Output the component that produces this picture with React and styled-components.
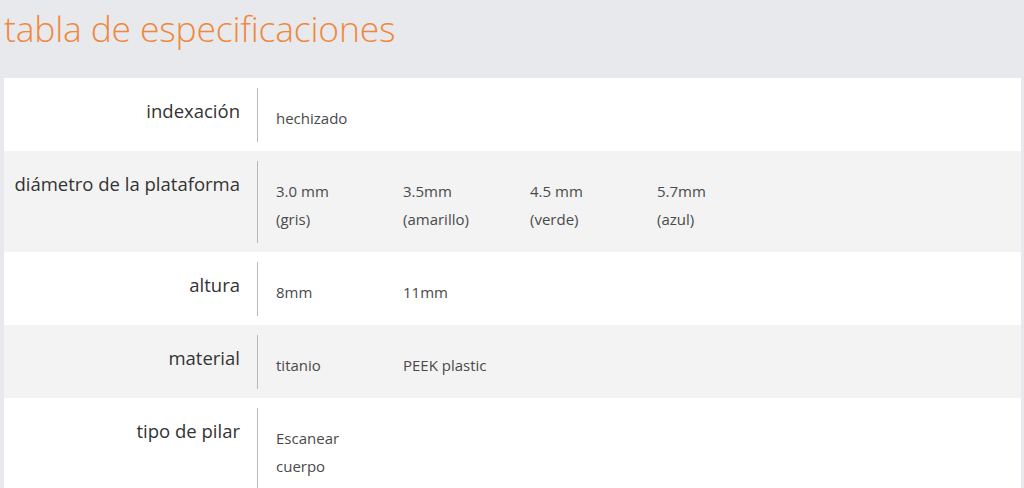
import React from 'react';
import styled, { createGlobalStyle } from 'styled-components';

const GlobalStyle = createGlobalStyle`
  html, body {
    margin: 0;
    padding: 0;
    background: #e8e9ed;
    font-family: "Open Sans", "Noto Sans", sans-serif;
  }
`;

const rows = [
  { label: 'indexación', values: [['hechizado']] },
  {
    label: 'diámetro de la plataforma',
    values: [
      ['3.0 mm', '(gris)'],
      ['3.5mm', '(amarillo)'],
      ['4.5 mm', '(verde)'],
      ['5.7mm', '(azul)'],
    ],
  },
  { label: 'altura', values: [['8mm'], ['11mm']] },
  { label: 'material', values: [['titanio'], ['PEEK plastic']] },
  { label: 'tipo de pilar', values: [['Escanear', 'cuerpo']] },
];

export default function App() {
  return (
    <Page>
      <GlobalStyle />
      <Title>tabla de especificaciones</Title>
      <Table>
        {rows.map((row, i) => (
          <Row key={row.label} $alt={i % 2 === 1}>
            <Label>{row.label}</Label>
            <Values>
              {row.values.map((lines, j) => (
                <Value key={j}>
                  {lines.map((l) => (
                    <div key={l}>{l}</div>
                  ))}
                </Value>
              ))}
            </Values>
          </Row>
        ))}
      </Table>
    </Page>
  );
}

const Page = styled.div`
  padding: 0 3px 0 4px;
  min-height: 100vh;
  box-sizing: border-box;
`;

const Title = styled.h1`
  margin: 0;
  height: 78px;
  padding-top: 4px;
  box-sizing: border-box;
  font-size: 35.5px;
  font-weight: 300;
  color: #f0883c;
  letter-spacing: -0.2px;
`;

const Table = styled.div`
  display: flex;
  flex-direction: column;
`;

const Row = styled.div`
  display: flex;
  padding: 10px 0 9px;
  background: ${(p) => (p.$alt ? '#f3f3f3' : '#ffffff')};
`;

const Label = styled.div`
  width: 236px;
  flex-shrink: 0;
  text-align: right;
  padding-top: 9px;
  padding-right: 17px;
  font-size: 18.5px;
  line-height: 28px;
  color: #333;
  white-space: nowrap;
`;

const Values = styled.div`
  display: flex;
  border-left: 1px solid #b8b8b8;
  padding: 16px 0 10px 18px;
  min-height: 28px;
`;

const Value = styled.div`
  width: 127px;
  font-size: 15px;
  line-height: 28px;
  color: #4a4a4a;
`;
